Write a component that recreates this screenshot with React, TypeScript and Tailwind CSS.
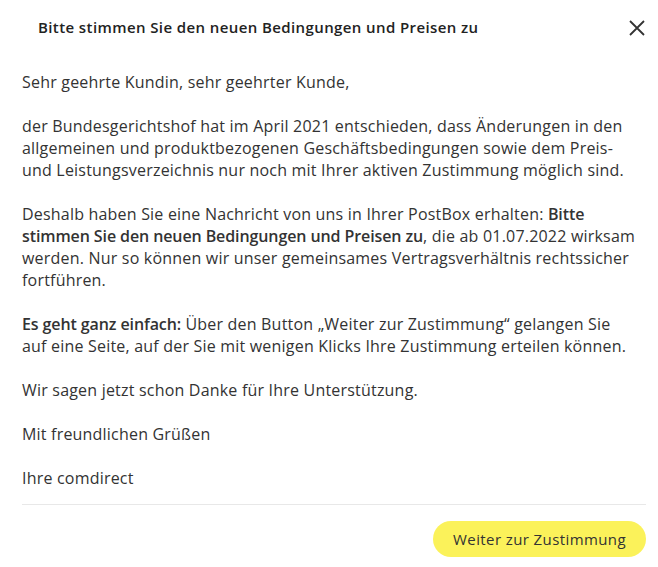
export default function App() {
  return (
    <div className="flex w-[658px] flex-col bg-white text-[#333] [font-family:'Open_Sans',sans-serif]">
      <div className="flex h-[55px] shrink-0 items-center justify-between pl-[38px] pr-[12px]">
        <h1 className="text-[15px] font-semibold tracking-[0.4px] text-[#222]">
          Bitte stimmen Sie den neuen Bedingungen und Preisen zu
        </h1>
        <button className="text-[#333]" aria-label="Schließen">
          <svg width="18" height="18" viewBox="0 0 18 18" fill="none" stroke="currentColor" strokeWidth="1.8">
            <path d="M2 2l14 14M16 2L2 16" />
          </svg>
        </button>
      </div>
      <div className="flex flex-col gap-[22px] whitespace-nowrap pl-[22px] pr-[12px] pt-[16px] text-[16px] leading-[22px] tracking-[0.2px]">
        <p>Sehr geehrte Kundin, sehr geehrter Kunde,</p>
        <p>
          der Bundesgerichtshof hat im April 2021 entschieden, dass Änderungen in den
          <br />
          allgemeinen und produktbezogenen Geschäftsbedingungen sowie dem Preis-
          <br />
          und Leistungsverzeichnis nur noch mit Ihrer aktiven Zustimmung möglich sind.
        </p>
        <p>
          Deshalb haben Sie eine Nachricht von uns in Ihrer PostBox erhalten:{" "}
          <b className="font-semibold tracking-[-0.1px]">Bitte</b>
          <br />
          <b className="font-semibold tracking-[-0.1px]">stimmen Sie den neuen Bedingungen und Preisen zu</b>, die ab
          01.07.2022 wirksam
          <br />
          werden. Nur so können wir unser gemeinsames Vertragsverhältnis rechtssicher
          <br />
          fortführen.
        </p>
        <p>
          <b className="font-semibold tracking-[-0.1px]">Es geht ganz einfach:</b> Über den Button „Weiter zur
          Zustimmung“ gelangen Sie
          <br />
          auf eine Seite, auf der Sie mit wenigen Klicks Ihre Zustimmung erteilen können.
        </p>
        <p>Wir sagen jetzt schon Danke für Ihre Unterstützung.</p>
        <p>Mit freundlichen Grüßen</p>
        <p>Ihre comdirect</p>
      </div>
      <div className="ml-[22px] mr-[12px] mt-[15px] border-t border-[#e8e8e8]" />
      <div className="flex justify-end pr-[12px] pt-[16px]">
        <button className="h-[36px] rounded-full bg-[#fbf25a] px-[20px] text-[15px] tracking-[0.4px] text-[#333]">
          Weiter zur Zustimmung
        </button>
      </div>
    </div>
  );
}
